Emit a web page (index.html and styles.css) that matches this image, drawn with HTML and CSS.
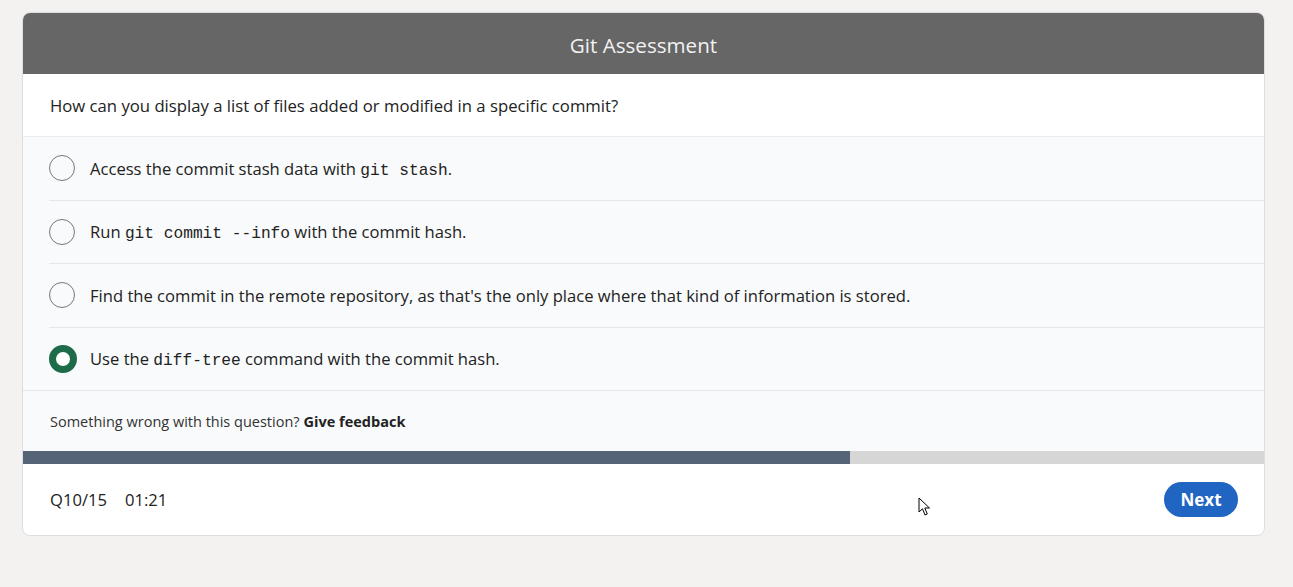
FILE: index.html
```html
<!DOCTYPE html>
<html>
<head>
<meta charset="utf-8">
<link rel="stylesheet" href="styles.css">
</head>
<body>
<div class="page">
  <div class="card">
    <div class="header">Git Assessment</div>
    <div class="question">How can you display a list of files added or modified in a specific commit?</div>
    <div class="options">
      <div class="option">
        <span class="radio"></span>
        <span class="label">Access the commit stash data with <code>git stash</code>.</span>
      </div>
      <div class="option">
        <span class="radio"></span>
        <span class="label">Run <code>git commit --info</code> with the commit hash.</span>
      </div>
      <div class="option">
        <span class="radio"></span>
        <span class="label">Find the commit in the remote repository, as that's the only place where that kind of information is stored.</span>
      </div>
      <div class="option last">
        <span class="radio checked"></span>
        <span class="label">Use the <code>diff-tree</code> command with the commit hash.</span>
      </div>
    </div>
    <div class="feedback">Something wrong with this question? <b>Give feedback</b></div>
    <div class="progress"><div class="fill" style="width: 66.6%"></div></div>
    <div class="footer">
      <span class="count">Q10/15</span>
      <span class="timer">01:21</span>
      <span class="spacer"></span>
      <button class="next">Next</button>
    </div>
  </div>
  <svg class="cursor" width="14" height="20" viewBox="0 0 14 20"><path d="M1 1 L1 15 L4.5 11.8 L7 18 L9.3 17 L6.8 11 L11.5 11 Z" fill="#fff" stroke="#000" stroke-width="1" stroke-linejoin="round"/></svg>
</div>
</body>
</html>
```

FILE: styles.css
```css
html, body {
  margin: 0;
  padding: 0;
  background: #f3f2f1;
}
body {
  font-family: "Open Sans", "Noto Sans", sans-serif;
  color: #222;
}
.page {
  position: relative;
  padding: 12px 28px 0 22px;
  height: 587px;
  box-sizing: border-box;
}
.card {
  width: 1243px;
  background: #fff;
  border: 1px solid #dedede;
  border-radius: 8px;
  overflow: hidden;
  box-sizing: border-box;
}
.header {
  background: #666666;
  color: #f2f2f2;
  height: 61px;
  display: flex;
  align-items: center;
  justify-content: center;
  font-size: 20.6px;
  padding-top: 2px;
  box-sizing: border-box;
}
.question {
  height: 62px;
  display: flex;
  align-items: center;
  padding-left: 27px;
  font-size: 16.7px;
  border-bottom: 1px solid #ececec;
}
.options {
  background: #f9fafb;
}
.option {
  height: 62.5px;
  display: flex;
  align-items: center;
  margin-left: 26px;
  border-bottom: 1px solid #e6e6e6;
  font-size: 16.6px;
}
.option.last {
  margin-left: 0;
  padding-left: 26px;
}
.radio {
  width: 24px;
  height: 24px;
  border: 1.5px solid #777;
  border-radius: 50%;
  flex: none;
  margin-right: 15px;
  box-sizing: content-box;
}
.radio.checked {
  width: 14px;
  height: 14px;
  border: 7.5px solid #1e6b4a;
  background: #fff;
  margin-right: 13px;
}
code {
  font-family: "Liberation Mono", "DejaVu Sans Mono", monospace;
  font-size: 16.2px;
  color: #222;
}
.feedback {
  background: #f9fafb;
  height: 60px;
  display: flex;
  align-items: center;
  padding-left: 27px;
  font-size: 14.5px;
  color: #333;
}
.feedback b {
  margin-left: 4px;
  font-weight: 700;
  color: #222;
}
.progress {
  height: 13px;
  background: #d6d6d6;
}
.fill {
  height: 100%;
  background: #556477;
}
.footer {
  height: 71px;
  display: flex;
  align-items: center;
  padding: 0 26px 0 27px;
  font-size: 16.6px;
}
.count {
  margin-right: 18px;
}
.spacer {
  flex: 1;
}
.next {
  width: 74px;
  height: 35px;
  border: none;
  border-radius: 18px;
  background: #1f65c1;
  color: #fff;
  font-family: "Open Sans", "Noto Sans", sans-serif;
  font-weight: 700;
  font-size: 17px;
  padding: 0;
}
.cursor {
  position: absolute;
  left: 918px;
  top: 497px;
}
```
